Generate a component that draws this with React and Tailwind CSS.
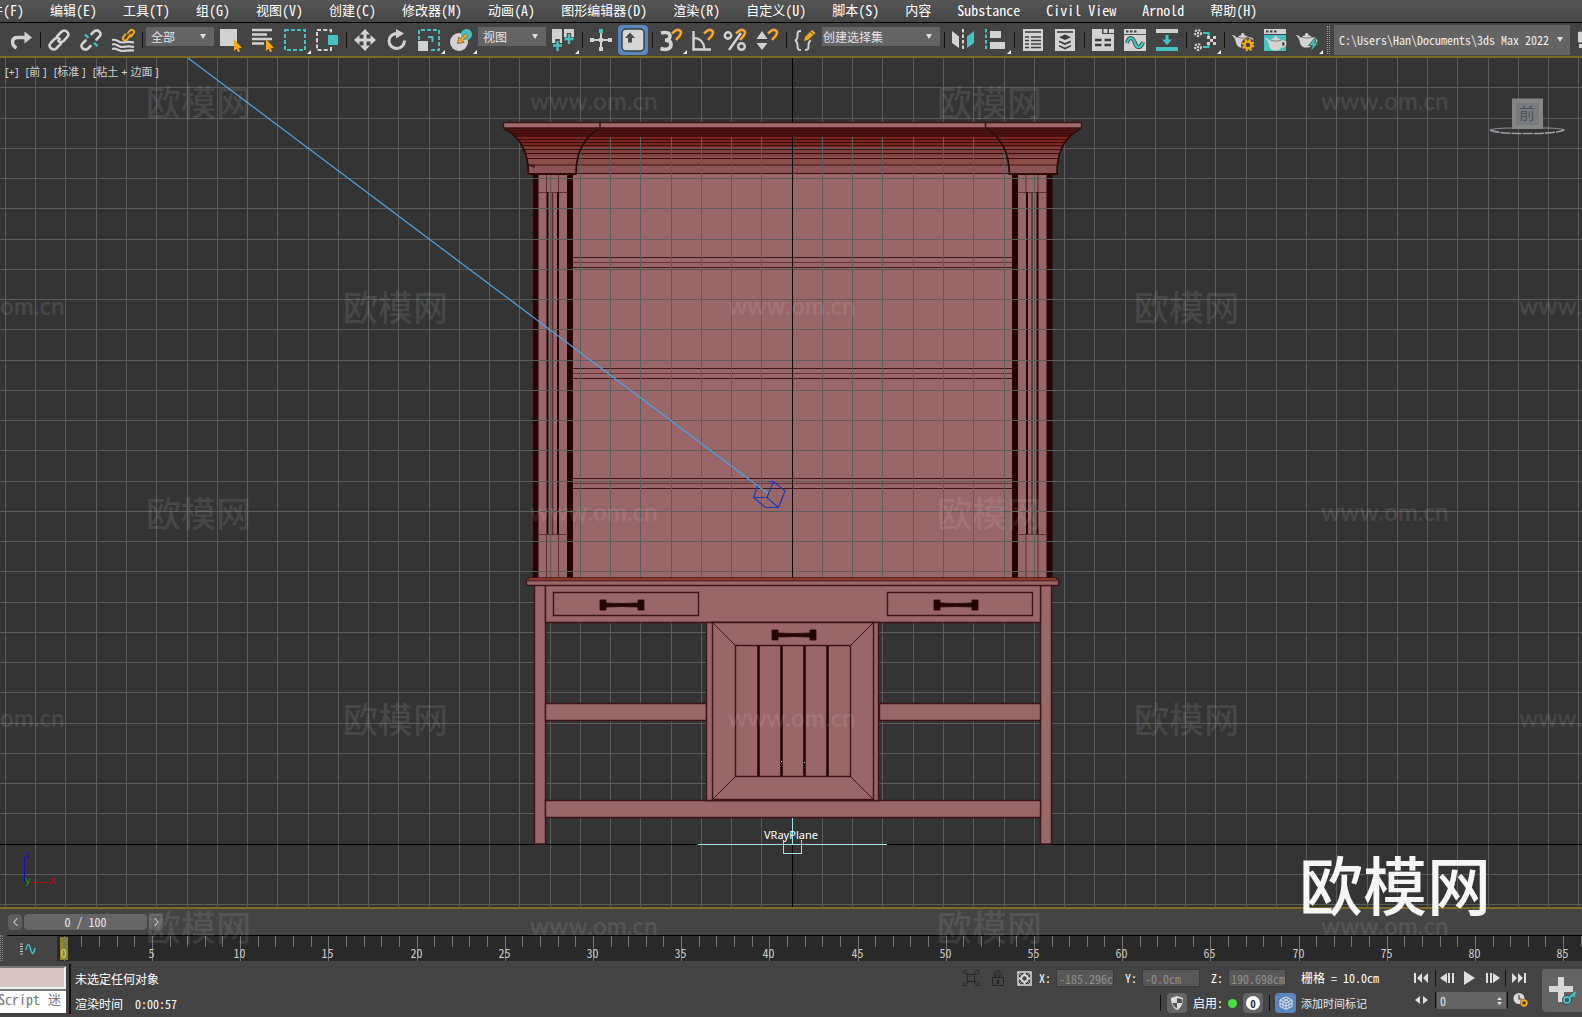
import { useState } from 'react';
import clsx from 'clsx';

const MONO = "font-['Noto_Sans_Mono_CJK_SC','Liberation_Mono','Noto_Sans_CJK_SC',monospace]";
const UI = "font-['Noto_Sans_Mono_CJK_SC','Noto_Sans_CJK_SC',sans-serif]";

const GREY = '#d2d2d2';
const TEAL = '#45c1c1';
const AMBER = '#f5a81c';

const MENUS = [
  ['文件', '(F)'],
  ['编辑', '(E)'],
  ['工具', '(T)'],
  ['组', '(G)'],
  ['视图', '(V)'],
  ['创建', '(C)'],
  ['修改器', '(M)'],
  ['动画', '(A)'],
  ['图形编辑器', '(D)'],
  ['渲染', '(R)'],
  ['自定义', '(U)'],
  ['脚本', '(S)'],
  ['内容', ''],
  ['', 'Substance'],
  ['', 'Civil View'],
  ['', 'Arnold'],
  ['帮助', '(H)'],
];

function Icon({ children, className = 'h-6 w-6' }) {
  return (
    <svg viewBox="0 0 24 24" className={className} fill="none" aria-hidden="true">
      {children}
    </svg>
  );
}

/* ---------- toolbar glyphs ---------- */

const Magnet = () => (
  <path d="M13 5.500 16.500 2.600c4-2.400 7.200 1.400 4.200 5L17 12" stroke={AMBER} strokeWidth="2.600" />
);

const Cursor = () => <path d="m15 11 8 9-3.600.2 1.800 3-2 .8-1.700-3.200L15 23z" fill={AMBER} />;

const Teapot = () => (
  <>
    <path
      d="M1 7c2.500 0 4 1.600 5 3 .6-1.200 1.800-2.300 4-2.800l.2-1.700c.8-.8 2.200-.8 3 0l.2 1.700c2 .4 3.300 1.200 4 2.300 2.800-1 5.600.6 5 3.700-.5 2.500-2.600 3.700-5.200 3.400-.8 1.300-2 2.400-3.200 2.900H9C6 18.500 4.800 15 4.500 12.600 4 10.500 2.500 9 1 7z"
      fill={GREY}
    />
    <path d="M18 11.500c1.500-.6 2.800 0 2.600 1.700-.1 1.300-.9 1.900-1.900 1.900z" fill="#444" />
    <path d="M7 9.300c3 1 7 1 10 0" stroke="#555" strokeWidth=".7" />
  </>
);

const ICONS = {
  redo: (
    <>
      <path d="M7.500 20C2.500 17.500 1.500 9.500 9 9.500h8" stroke={GREY} strokeWidth="3.400" />
      <path d="M15.500 3.500 23 9.500l-7.500 6z" fill={GREY} />
    </>
  ),
  link: (
    <g stroke={GREY} strokeWidth="2.600" strokeLinecap="round">
      <path d="m10 8.500 4.500-4.700c3.700-3.300 9 1.200 5.800 5.200l-3.600 3.800c-1.600 1.600-4 1.500-5.300.2" />
      <path d="m14 15.500-4.500 4.700c-3.700 3.300-9-1.200-5.800-5.200l3.600-3.800c1.600-1.600 4-1.500 5.300-.2" />
    </g>
  ),
  unlink: (
    <>
      <g stroke={GREY} strokeWidth="2.600" strokeLinecap="round">
        <path d="m12.500 6 2.500-2.500c3.500-3 8.500 1.200 5.500 5l-3 3" />
        <path d="M11.500 18 9 20.500c-3.500 3-8.500-1.200-5.500-5l3-3" />
      </g>
      <path d="m6 6.500 3.500 3.300m5.500 5 3.500 3.300" stroke={TEAL} strokeWidth="2.400" />
    </>
  ),
  bind: (
    <>
      <path
        d="M1 12c4.500-1.500 6 2.500 10 2.500S17 13 23 14.500M1 16.500c4.500-1.500 6 2.500 10 2.500s6-1.500 12 0M1 21c4.500-1.500 6 2 10 2s6-1 12-.5"
        stroke={GREY}
        strokeWidth="2.200"
      />
      <g stroke={AMBER} strokeWidth="2" strokeLinecap="round">
        <path d="m17 5 1.800-2.400c2.600-2 5.200.4 3.600 2.800L20 8.700" />
        <path d="M19.500 6.500 16 11.500c-2.300 2.200-5.200-.2-3.500-2.700l2-2.600" />
      </g>
    </>
  ),
  select: (
    <>
      <path d="M1 1h17v17H1z" fill={GREY} />
      <Cursor />
    </>
  ),
  selectName: (
    <>
      <path d="M1 2h20M1 6.500h15M1 11h20M1 15.500h12" stroke={GREY} strokeWidth="2.400" />
      <Cursor />
    </>
  ),
  region: <path d="M2 2h20v20H2z" stroke={TEAL} strokeWidth="2" strokeDasharray="4 2" />,
  windowCross: (
    <>
      <path d="M2 2h14v20H2z" stroke={GREY} strokeWidth="2" strokeDasharray="4 2.200" />
      <path d="M12 6h11v12H12z" fill="#444" />
      <path d="M13 7h10v10H13z" fill={TEAL} />
    </>
  ),
  move: (
    <path
      d="m12 1 5 5.500h-3.500v4h4V7l5.500 5-5.500 5v-3.500h-4v4H17L12 23l-5-5.500h3.500v-4h-4V17L1 12l5.500-5v3.500h4v-4H7z"
      fill={GREY}
    />
  ),
  rotate: (
    <>
      <path d="M19.500 12.500c0 4.200-3.200 8-7.500 8s-8-3.300-8-7.600S7.500 5.500 12.500 5.500" stroke={GREY} strokeWidth="3" />
      <path d="M11 1v9.500l8-5z" fill={GREY} />
    </>
  ),
  scale: (
    <>
      <path d="M2 12V2h20v20H12" stroke={TEAL} strokeWidth="2" strokeDasharray="4 2" />
      <path d="M1 13h10v10H1z" fill={GREY} />
      <path d="M11 9h4.500v5" stroke={TEAL} strokeWidth="2" />
    </>
  ),
  place: (
    <>
      <circle cx="10" cy="14" r="9" fill={GREY} />
      <circle cx="17.500" cy="6.500" r="5.500" fill={TEAL} />
      <path d="m8.500 15.500 1.300-6.500 1.700 1.700 5-5.200 2.200 2.200-5.100 5.100 1.600 1.600z" fill={AMBER} stroke="#444" strokeWidth=".6" />
    </>
  ),
  pivot: (
    <>
      <path d="M1 1h10v14H1zM13 1h10v10H13z" fill={GREY} />
      <path d="M6.500 11v12M1 17.500h11M18 5v12M12.500 11.500H23.500" stroke="#444" strokeWidth="4.500" />
      <path d="M6.500 13v10M2 17.500h9M18 6v10M13.500 11h9" stroke={TEAL} strokeWidth="2.400" />
    </>
  ),
  manipulate: (
    <>
      <path d="M12 4v16M3 12h18" stroke={GREY} strokeWidth="2" />
      <path d="M10 19h4v4h-4zM1 10h4v4H1zM19 10h4v4h-4zM10 10h4v4h-4z" fill={GREY} />
      <path d="M10 1h4v4h-4z" fill={TEAL} />
    </>
  ),
  keyboard: (
    <>
      <rect x="1" y="1" width="22" height="22" rx="4" fill="#d6d6d6" stroke="#3c3c3c" strokeWidth="1.400" />
      <path d="m9 4.500 5 5.500h-3v4.500H7V10H4z" fill="#4a4a4a" />
    </>
  ),
  snap: (
    <>
      <path d="M2 5c6-1.500 9 .2 9 3.300 0 2.700-2.400 3.800-5 3.800 3 0 6 1 6 4.300C12 21 7 22.500 1.500 20.500" stroke={GREY} strokeWidth="3.600" />
      <Magnet />
    </>
  ),
  angle: (
    <>
      <path d="M2.500 3v18.500H20" stroke={GREY} strokeWidth="2.400" />
      <path d="M3 10c6 0 10 4.500 10.500 11" stroke={GREY} strokeWidth="2.200" />
      <Magnet />
    </>
  ),
  percent: (
    <>
      <circle cx="5" cy="7.500" r="3.200" stroke={GREY} strokeWidth="2.400" />
      <circle cx="18.500" cy="18.500" r="3.300" stroke={GREY} strokeWidth="2.400" />
      <path d="M18 5 6 22" stroke={GREY} strokeWidth="2.400" />
      <Magnet />
    </>
  ),
  spinner: (
    <>
      <path d="m7 3 5.500 8h-11zM7 22l-5.500-7h11z" fill={GREY} />
      <Magnet />
    </>
  ),
  named: (
    <>
      <path
        d="M8 3C4.500 3 4.500 4 4.500 7.500S4 12 2 12.500c2 .5 2.500 1.500 2.500 5S5 22 8 22M12 22c3.500 0 3.500-1 3.500-4.500s.5-4.500 2.500-5"
        stroke={GREY}
        strokeWidth="2"
      />
      <path d="m11 13 1-4 7-7 3.500 3-7.500 7z" fill={AMBER} />
      <path d="m17 3.500 3.500 3.200" stroke="#444" strokeWidth="1" />
    </>
  ),
  mirror: (
    <>
      <path d="m1 3 7 5.500V20l-7-5z" fill={GREY} />
      <path d="M12 1v22" stroke={GREY} strokeWidth="2" strokeDasharray="3.500 2" />
      <path d="m23 3-7 5.500V20l7-5z" fill={TEAL} />
    </>
  ),
  align: (
    <>
      <path d="M3 1v22" stroke={TEAL} strokeWidth="2" strokeDasharray="3.500 2" />
      <path d="M7 3h11v7H7zM7 14h15v7H7z" fill={GREY} />
    </>
  ),
  sceneExplorer: (
    <>
      <path d="M2 1h20v22H2z" fill={GREY} />
      <path d="M4 4h16M4 9h4M10 9h10M4 12.500h4M10 12.500h10M4 16h4M10 16h10M4 19.500h4M10 19.500h10" stroke="#3c3c3c" strokeWidth="1.700" />
    </>
  ),
  layers: (
    <>
      <path d="M2 1h20v22H2z" fill={GREY} />
      <path d="M4 4h16" stroke="#3c3c3c" strokeWidth="1.600" />
      <path d="m12 6.500 6 2.700-6 2.700-6-2.700zM6 12.500l6 2.400 6-2.400v1.800L12 17l-6-2.700zM6 17l6 2.400 6-2.400v1.500L12 21.500l-6-3z" fill="#3c3c3c" />
    </>
  ),
  ribbon: (
    <>
      <path d="M1 6h22v17H1zM1 1h10v6H1zM12.500 1h4v4h-4zM18 1h5v4h-5z" fill={GREY} />
      <path d="M4 12h6.500M13.500 12H20M4 17h6.500M13.500 17H20" stroke="#3c3c3c" strokeWidth="2.600" />
    </>
  ),
  curves: (
    <>
      <path d="M1 1h22v22H1z" fill={GREY} />
      <path d="M3 3.500h2.500M7 3.500h2.500M11 3.500h2.500" stroke="#3c3c3c" strokeWidth="2.200" />
      <path d="M1 6.500h22" stroke="#555" strokeWidth="1" />
      <path d="M4 15c2-7 6-6 8 0s6 5 8-1" stroke="#3c3c3c" strokeWidth="4" />
      <path d="M4 15c2-7 6-6 8 0s6 5 8-1" stroke={TEAL} strokeWidth="2.400" />
    </>
  ),
  schematic: (
    <>
      <path d="M1 1h22v4H1z" fill={GREY} />
      <path d="M1 19h22v4H1zM10.500 7h3v4.500H17l-5 5.500-5-5.500h3.500z" fill={TEAL} />
    </>
  ),
  material: (
    <>
      <path d="M10 5h5.500v5M10 19h5.500v-5" stroke={TEAL} strokeWidth="2" />
      <circle cx="5" cy="5" r="3" fill="#444" stroke={GREY} strokeWidth="2" strokeDasharray="2.200 1.300" />
      <circle cx="5" cy="19" r="3" fill="#444" stroke={GREY} strokeWidth="2" strokeDasharray="2.200 1.300" />
      <circle cx="5" cy="5" r="1.200" fill={GREY} />
      <circle cx="5" cy="19" r="1.200" fill={GREY} />
      <path d="M14 8h3v3h-3zM20 8h3v3h-3zM17 11h3v3h-3zM14 14h3v3h-3zM20 14h3v3h-3z" fill={GREY} />
    </>
  ),
  renderSetup: (
    <>
      <Teapot />
      <circle cx="17" cy="17" r="7" fill="#444" />
      <circle cx="17" cy="17" r="5.300" stroke={AMBER} strokeWidth="2" strokeDasharray="2.300 1.860" />
      <circle cx="17" cy="17" r="3.400" stroke={AMBER} strokeWidth="2.400" />
    </>
  ),
  renderFrame: (
    <>
      <path d="M1 7h22v16H1z" fill={TEAL} />
      <path d="M1 1h22v5H1z" fill={GREY} />
      <path d="M3 3.500h2.500M7 3.500h2.500M11 3.500h2.500" stroke="#3c3c3c" strokeWidth="2.200" />
      <g transform="translate(1 3)">
        <Teapot />
      </g>
    </>
  ),
  render: (
    <>
      <Teapot />
      <path d="m20 10-6.500 7.500h4L15 24l8.500-9h-4l2.500-5z" fill={TEAL} stroke="#444" strokeWidth=".8" />
    </>
  ),
};

/* 'fly' marks buttons with a flyout corner */
const TOOLBAR = [
  { icon: 'redo', label: '重做' },
  '|',
  { icon: 'link', label: '选择并链接' },
  { icon: 'unlink', label: '取消链接选择' },
  { icon: 'bind', label: '绑定到空间扭曲' },
  '|',
  { select: 'filter', label: '选择过滤器', options: ['全部', '几何体', '图形', '灯光'] },
  { icon: 'select', label: '选择对象' },
  { icon: 'selectName', label: '按名称选择' },
  { icon: 'region', label: '矩形选择区域', fly: true },
  { icon: 'windowCross', label: '窗口/交叉' },
  '|',
  { icon: 'move', label: '选择并移动' },
  { icon: 'rotate', label: '选择并旋转' },
  { icon: 'scale', label: '选择并均匀缩放', fly: true },
  { icon: 'place', label: '选择并放置', fly: true },
  { select: 'coords', label: '参考坐标系', options: ['视图', '屏幕', '世界'] },
  { icon: 'pivot', label: '使用轴点中心', fly: true },
  '|',
  { icon: 'manipulate', label: '选择并操纵' },
  { icon: 'keyboard', label: '键盘快捷键覆盖切换', toggle: true },
  '|',
  { icon: 'snap', label: '捕捉开关', fly: true },
  { icon: 'angle', label: '角度捕捉切换' },
  { icon: 'percent', label: '百分比捕捉切换' },
  { icon: 'spinner', label: '微调器捕捉切换' },
  '|',
  { icon: 'named', label: '管理选择集' },
  { select: 'sets', label: '命名选择集', options: ['创建选择集'], wide: true },
  '|',
  { icon: 'mirror', label: '镜像' },
  { icon: 'align', label: '对齐', fly: true },
  '|',
  { icon: 'sceneExplorer', label: '切换场景资源管理器' },
  { icon: 'layers', label: '切换层资源管理器' },
  '|',
  { icon: 'ribbon', label: '显示功能区' },
  { icon: 'curves', label: '曲线编辑器' },
  { icon: 'schematic', label: '图解视图' },
  '|',
  { icon: 'material', label: '材质编辑器', fly: true },
  '|',
  { icon: 'renderSetup', label: '渲染设置' },
  { icon: 'renderFrame', label: '渲染帧窗口' },
  { icon: 'render', label: '渲染产品', fly: true },
];

function MenuBar() {
  return (
    <nav className="flex h-[23px] shrink-0 items-start border-b border-black bg-linear-to-b from-[#565656] to-[#454545] text-white">
      <div className="-ml-[23px] flex gap-[26px]">
        {MENUS.map(([cjk, latin]) => (
          <button key={cjk + latin} type="button" className="flex h-5 shrink-0 items-center whitespace-nowrap leading-5">
            {cjk && <span className={clsx(UI, 'text-[13px]')}>{cjk}</span>}
            {latin && <span className={clsx(MONO, 'text-sm leading-5')}>{latin}</span>}
          </button>
        ))}
      </div>
    </nav>
  );
}

function Separator() {
  return (
    <div className="flex w-[6px] shrink-0 justify-center">
      <span className="h-4 w-px bg-[#111]" />
    </div>
  );
}

function ToolSelect({ item }) {
  return (
    <div className={clsx('relative mx-px mb-[6px] shrink-0', item.wide ? 'w-[118px]' : 'w-[68px]')}>
      <select
        aria-label={item.label}
        className={clsx(UI, 'block h-[19px] w-full appearance-none bg-[#646464] text-xs text-[#e4e4e4]', item.wide ? 'pl-px' : 'pl-[5px]')}
      >
        {item.options.map((o) => (
          <option key={o}>{o}</option>
        ))}
      </select>
      <svg viewBox="0 0 6 5" className="pointer-events-none absolute right-2 top-[7px] h-[5px] w-[6px]">
        <path d="M0 0h6L3 5z" fill="#e0e0e0" />
      </svg>
    </div>
  );
}

function Toolbar() {
  const [override, setOverride] = useState(true);

  return (
    <div className="flex h-[33px] shrink-0 items-center overflow-hidden bg-[#444] pl-[5px]">
      {TOOLBAR.map((item, i) => {
        if (item === '|') return <Separator key={i} />;
        if (item.select) return <ToolSelect key={item.select} item={item} />;
        return (
          <button
            key={item.icon}
            type="button"
            title={item.label}
            aria-label={item.label}
            onClick={item.toggle ? () => setOverride(!override) : undefined}
            className="relative flex h-8 w-8 shrink-0 items-center justify-center"
          >
            <span
              className={clsx(
                'flex h-[30px] w-[30px] items-center justify-center rounded-sm',
                item.toggle && override && 'bg-[#5a86c0]'
              )}
            >
              <Icon>{ICONS[item.icon]}</Icon>
            </span>
            {item.fly && (
              <svg viewBox="0 0 4 4" className="absolute bottom-[2px] right-0 h-1 w-1">
                <path d="M4 0v4H0z" fill="#f0f0f0" />
              </svg>
            )}
          </button>
        );
      })}
      <span className="ml-1 h-7 w-[3px] shrink-0 border-x border-dotted border-[#999]" />
      <button
        type="button"
        className={clsx(MONO, 'ml-1 flex h-[30px] min-w-0 flex-1 items-center justify-between overflow-hidden whitespace-nowrap bg-[#646464] pl-[5px] pr-[7px] text-xs text-[#eee]')}
      >
        {'C:\\Users\\Han\\Documents\\3ds Max 2022'}
        <svg viewBox="0 0 6 5" className="h-[5px] w-[6px] shrink-0">
          <path d="M0 0h6L3 5z" fill="#e0e0e0" />
        </svg>
      </button>
      <div className="flex w-3 shrink-0 justify-end">
        <svg viewBox="0 0 5 18" className="h-[18px] w-[5px]">
          <path d="M1 1q2-1 4 0v10q-2 1-4 0zM2 13h3v4H2z" fill={GREY} />
        </svg>
      </div>
    </div>
  );
}

/* ---------- viewport scene ---------- */

const CX = 792.5;
const GROUND = 844.5;
const EDGE = '#3d1417';
const DARK = '#240505';
const CLAY = '#99666a';

// grid lines snap to whole pixels
const gridX = Array.from({ length: 53 }, (_, i) => Math.floor(792.2 + (i - 26) * 30.26) + 0.5);
const gridY = Array.from({ length: 29 }, (_, i) => Math.floor(844.24 + (i - 26) * 30.25) + 0.5);

function Grid({ stroke }) {
  return (
    <g stroke={stroke} strokeWidth="1" shapeRendering="crispEdges">
      {gridX.map((x) => (
        <path key={x} d={`M${x} 58V907`} />
      ))}
      {gridY.map((y) => (
        <path key={y} d={`M0 ${y}H1582`} />
      ))}
    </g>
  );
}

function Pilaster({ x }) {
  return (
    <g>
      <path d={`M${x} 174h40v404h-40z`} fill={CLAY} />
      <path d={`M${x} 174h6v404h-6zM${x + 34.500} 174h6v404h-6z`} fill={DARK} />
      <path d={`M${x + 14} 174v18M${x + 26} 174v18M${x + 14} 535v43M${x + 26} 535v43M${x + 6} 192.500h29M${x + 6} 534.500h29`} stroke="#5f2f32" />
      <path d={`M${x + 15} 192v342M${x + 25.500} 192v342`} stroke={DARK} strokeWidth="2" />
      <path d={`M${x + 20} 192v342`} stroke="#5a2b2e" strokeWidth="1.500" />
    </g>
  );
}

function Handle({ x, y }) {
  return (
    <path
      d={`M${x} ${y}h6v3q16 1 32 0v-3h6v10h-6v-3q-16-1-32 0v3h-6z`}
      fill={DARK}
      stroke={DARK}
      strokeWidth=".8"
    />
  );
}

const CROWN_BANDS = [
  [128, 9, '#521312'],
  [137, 10, '#78261f'],
  [147, 9, '#7f3f3c'],
  [156, 8, '#8a4d4c'],
  [164, 10, '#8d5457'],
];
const CROWN_LINES = [128.500, 131, 133.500, 136, 139.500, 142.500, 145.500, 149.500, 153.500, 158.500, 165, 173.500];

function CrownFill({ x, width }) {
  return (
    <>
      {CROWN_BANDS.map(([y, h, c]) => (
        <rect key={y} x={x} y={y} width={width} height={h} fill={c} />
      ))}
      {CROWN_LINES.map((y) => (
        <path key={y} d={`M${x} ${y}h${width}`} stroke="#3a0e0e" strokeWidth="1" />
      ))}
    </>
  );
}

const CORNER_L = 'M503.500 128C520 137 528 150 528.500 174H576C576 152 584 137 600 128z';
const CORNER_R = 'M1081.500 128C1065 137 1057 150 1057 174H1009.500C1009 152 1001 137 985.500 128z';

function Scene() {
  return (
    <svg viewBox="0 58 1582 849" preserveAspectRatio="xMidYMid slice" className="absolute inset-0 h-full w-full" role="img" aria-label="前视图">
      <defs>
        <clipPath id="crownLeft">
          <path d={CORNER_L} />
        </clipPath>
        <clipPath id="crownRight">
          <path d={CORNER_R} />
        </clipPath>
      </defs>
      <rect y="58" width="1582" height="849" fill="#343434" />

      {/* hutch back, shelves and uprights */}
      <rect x="572" y="174" width="440" height="404" fill={CLAY} />
      {[257.500, 368.500, 478.500].map((y) => (
        <g key={y}>
          <path d={`M572 ${y}h440M572 ${y + 10}h440`} stroke={EDGE} />
          <path d={`M572 ${y + 5}h440`} stroke="#6b3035" />
        </g>
      ))}
      <CrownFill x={560} width={460} />
      <Pilaster x={532.500} />
      <Pilaster x={1012} />

      <Grid stroke="#5c5c5c" />
      <path d={`M${CX} 58V907M0 ${GROUND}H1582`} stroke="#000" shapeRendering="crispEdges" />
      <rect x="572" y="128" width="440" height="9" fill="#521312" />
      <path d="M572 128.500h440M572 131h440M572 133.500h440M572 136h440" stroke="#3a0e0e" />

      {/* crown */}
      <g clipPath="url(#crownLeft)">
        <CrownFill x={500} width={110} />
      </g>
      <g clipPath="url(#crownRight)">
        <CrownFill x={980} width={110} />
      </g>
      <path d={`${CORNER_L}${CORNER_R}`} fill="none" stroke="#2e0a0a" strokeWidth="1.800" />
      <path d="M503.500 122.500h578v5.500h-578z" fill="#a06a6d" stroke={EDGE} strokeWidth="1.400" />
      <path d="M600 122v6M985.500 122v6M529 165l6 2" stroke={EDGE} strokeWidth="1.600" />

      {/* table top and frame */}
      <g fill={CLAY} stroke={EDGE} strokeWidth="1.400">
        <path d="M534.500 585h11v259h-11zM1040.500 585h11v259h-11z" />
        <path d="M545.500 585h495v37.500h-495zM545.500 703.500h161v17h-161zM879.500 703.500h161v17h-161zM545.500 800.500h495v17h-495z" />
        <path d="M706.500 622.500h172v178h-172z" />
        <path d="M712.500 622.500h161v177h-161z" />
        <path d="M712.500 622.500l23 23M873.500 622.500l-23 23M712.500 799.500l23-23M873.500 799.500l-23-23" strokeWidth="1" />
        <path d="M735.500 645.500h115v131h-115z" />
        <path d="M553.500 592.500h145v23h-145zM887.500 592.500h145v23h-145z" />
        <path d="M526.500 585.500v-5l3-2.500h526l3 2.500v5z" />
      </g>
      <path d="M529 579h527" stroke="#8f3530" strokeWidth="2" />
      <path d="M528 580.800h529" stroke={EDGE} strokeWidth="1" />
      <path d="M758.500 646v130M781.500 646v130M804.500 646v130M827.500 646v130" stroke={DARK} strokeWidth="2.600" />
      <Handle x={600} y={600} />
      <Handle x={934} y={600} />
      <Handle x={772} y={630} />
      <path d="M781 761.500h1" stroke="#fff" />
      <path d="M804 762.500h1" stroke="#7fd" />

      {/* light target and light plane */}
      <path d="M188 58 768 493.500" stroke="#4ba6ea" strokeWidth="1.200" />
      <path
        d="M753.500 497.500h13.500l6.500-16M753.500 497.500l4-11.500M768 481.500h5.500l11.500 9.500-6.500 16.500h-13l-12-10M767 497.500l11.500 10"
        fill="none"
        stroke="#1b3bb8"
        strokeWidth="1.200"
      />
      <g stroke="#9be8ec" fill="none" shapeRendering="crispEdges">
        <path d="M698 844.500h189M792.500 818v26M783.500 840v13.500h18V840" />
      </g>
      <text x="764" y="839" fill="#fff" className="font-['Noto_Sans',sans-serif] text-[11px]">VRayPlane</text>

      {/* axis tripod */}
      <path d="M24.500 857v25" stroke="#1010b4" />
      <path d="M31 882.500h22" stroke="#b01010" />
      <g className="font-['DejaVu_Sans',sans-serif] text-[10px]">
        <text x="25" y="858" fill="#1515c0">z</text>
        <text x="25" y="884" fill="#12a012">y</text>
        <text x="50" y="884" fill="#b01010">x</text>
      </g>

      {/* view cube */}
      <path d="M1490 130c5-1.500 12-2 22-2M1543 128c10 0 18 .5 22 2" fill="none" stroke="#8f9499" />
      <path d="M1490 130c6 3 20 3.500 37 3.500s31-.5 37-3.500" fill="none" stroke="#9aa0a6" strokeWidth="1.600" strokeDasharray="10 1" />
      <path d="M1512 98.500h31V129h-31z" fill="#868686" />
      <path d="M1516 103h23v22h-23z" fill="#787b7f" />
      <text x="1519" y="119" fill="#4d5258" className="font-['Noto_Sans_CJK_SC',sans-serif] text-base">前</text>
    </svg>
  );
}

function Viewport() {
  return (
    <main className="relative min-h-0 flex-1 overflow-hidden border-y-2 border-[#7d6a27] bg-[#343434]">
      <Scene />
      <div className={clsx("font-['Noto_Sans','Noto_Sans_CJK_SC',sans-serif]", 'relative flex gap-[7px] pl-[5px] pt-[6px] text-[11px] leading-4 text-[#d0d0d0]')}>
        <button type="button">[+]</button>
        <button type="button">[前 ]</button>
        <button type="button">[标准 ]</button>
        <button type="button">[粘土 + 边面 ]</button>
      </div>
    </main>
  );
}

/* ---------- time slider ---------- */

function TimeSlider() {
  const [frame, setFrame] = useState(0);

  return (
    <div className={clsx(MONO, 'flex h-[26px] shrink-0 items-center gap-[2px] bg-[#444] pl-2 text-xs text-[#e6e6e6]')}>
      <button type="button" aria-label="上一帧" onClick={() => setFrame(Math.max(0, frame - 1))} className="flex h-4 w-[14px] items-center justify-center rounded-sm bg-[#5e5e5e]">
        <svg viewBox="0 0 5 8" className="h-2 w-[5px]"><path d="M4.500 0 .7 4l3.800 4" fill="none" stroke="#eee" /></svg>
      </button>
      <button type="button" className="flex h-4 w-[123px] items-center justify-center rounded-sm bg-[#666]">
        {frame} / 100
      </button>
      <button type="button" aria-label="下一帧" onClick={() => setFrame(Math.min(100, frame + 1))} className="flex h-4 w-[14px] items-center justify-center rounded-sm bg-[#5e5e5e]">
        <svg viewBox="0 0 5 8" className="h-2 w-[5px]"><path d="M.5 0l3.800 4-3.800 4" fill="none" stroke="#eee" /></svg>
      </button>
    </div>
  );
}

function TrackBar() {
  const ticks = Array.from({ length: 87 }, (_, i) => i);
  const at = (i) => Math.floor(7.2 + i * 17.64) + 0.5;

  return (
    <div className="flex h-[26px] shrink-0 bg-[#444]">
      <span className="w-[3px] border-x border-dotted border-[#8a8a8a]" />
      <button type="button" aria-label="打开迷你曲线编辑器" className="ml-1 flex w-[50px] items-center justify-center border-t border-black pr-2">
        <svg viewBox="0 0 16 12" className="h-3 w-4" fill="none">
          <path d="M0 1h3M0 3.500h3M0 6h3M0 8.500h3M0 11h3" stroke="#ccc" />
          <path d="M6 7c1-7 3-7 4.500-1s3 6 4.500-1" stroke={TEAL} strokeWidth="1.500" />
        </svg>
      </button>
      <svg className={clsx(MONO, 'h-full min-w-0 flex-1 border-t border-black bg-[#292929] text-xs')} role="img" aria-label="时间标尺">
        <rect x="3" y="1" width="8" height="23" fill="#8b8425" />
        {ticks.map((i) => (
          <path key={i} d={`M${at(i)} 0V${i % 5 === 0 ? 25 : 11}`} stroke="#767676" />
        ))}
        {ticks
          .filter((i) => i % 5 === 0)
          .map((i) => (
            <text key={i} x={at(i) - 1} y="22" textAnchor="middle" fill={i ? '#c8c8c8' : '#e0d860'}>
              {i}
            </text>
          ))}
      </svg>
    </div>
  );
}

/* ---------- status bar ---------- */

function CoordField({ axis, value }) {
  return (
    <label className="flex items-center gap-[5px] text-xs text-white">
      <span className="w-3 whitespace-nowrap">{axis}:</span>
      <input
        defaultValue={value}
        className="h-[18px] w-[58px] border border-[#3c3c3c] bg-[#585858] pl-[2px] text-xs leading-4 text-[#8f8f8f]"
      />
    </label>
  );
}

function Divider({ className = 'h-4' }) {
  return <span className={clsx('w-px shrink-0 bg-[#111]', className)} />;
}

function Coordinates() {
  return (
    <div className={clsx(MONO, 'flex w-[416px] shrink-0 flex-col gap-[5px] pt-[7px]')}>
      <div className="flex h-5 items-center">
        <button type="button" aria-label="孤立当前选择">
          <svg viewBox="0 0 16 16" className="h-4 w-4" fill="none" stroke="#262626">
            <path d="M4.500 4.500h7v7h-7zM.5 4V.5H4M12 .5h3.500V4M15.500 12v3.500H12M4 15.500H.5V12M3 5V3h2M11 3h2v2M13 11v2h-2M5 13H3v-2" />
          </svg>
        </button>
        <button type="button" aria-label="选择锁定切换" className="ml-3">
          <svg viewBox="0 0 14 16" className="h-4 w-[14px]" fill="none" stroke="#262626">
            <path d="M1.500 7.500h11v8h-11zM3.500 7V4.500C3.500-.5 10.500-.5 10.500 4.500V7M5.500 7V5c0-2.500 3-2.500 3 0v2" />
            <path d="M7 10v4" strokeWidth="2.500" />
          </svg>
        </button>
        <button type="button" aria-label="绝对模式变换输入" className="ml-3">
          <svg viewBox="0 0 15 15" className="h-[15px] w-[15px]" fill="none" stroke="#dcdcdc">
            <path d="M1 1h13v13H1z" strokeWidth="1.500" />
            <circle cx="7.500" cy="7.500" r="3.200" strokeWidth="2" />
            <path d="M7.500 2v3M7.500 10v3M2 7.500h3M10 7.500h3" strokeWidth="2" />
            <path d="m2 2 2.500 2.500M13 2l-2.500 2.500M2 13l2.500-2.500M13 13l-2.500-2.500" strokeWidth=".8" />
          </svg>
        </button>
        <div className="ml-[7px] flex gap-[11px]">
          <CoordField axis="X" value="-185.296cm" />
          <CoordField axis="Y" value="-0.0cm" />
          <CoordField axis="Z" value="190.698cm" />
        </div>
        <p className={clsx(MONO, 'ml-[15px] whitespace-nowrap text-xs text-white')}>栅格 = 10.0cm</p>
      </div>
      <div className="flex h-5 items-center pl-[197px]">
        <Divider className="h-4" />
        <button type="button" aria-label="安全" className="ml-[6px] flex h-5 w-5 items-center justify-center rounded-sm bg-[#646464]">
          <svg viewBox="0 0 12 14" className="h-[14px] w-3">
            <path d="M6 0l6 2c0 6-2 10-6 12C2 12 0 8 0 2z" fill="#ddd" />
            <path d="M6 2v5h5c.3-1.300.4-2.500.3-3.800zM6 7v5.500C3.500 11 2 9.500 1.300 7z" fill="#555" />
          </svg>
        </button>
        <span className={clsx(UI, 'ml-[6px] w-[30px] whitespace-nowrap text-xs text-white')}>启用:</span>
        <span className="ml-[5px] h-[9px] w-[9px] rounded-full bg-[#4fdd45]" />
        <button type="button" className="ml-[6px] flex h-5 w-5 items-center justify-center rounded-sm bg-[#646464]">
          <span className="flex h-[14px] w-[14px] items-center justify-center rounded-full bg-white text-[11px] font-bold leading-none text-[#333]">0</span>
        </button>
        <Divider className="ml-[6px] h-4" />
        <button type="button" aria-label="时间标记" className="ml-[5px] flex h-5 w-[21px] items-center justify-center rounded-sm bg-[#5a86c0]">
          <svg viewBox="0 0 14 14" className="h-[14px] w-[14px]" fill="none" stroke="#e4e4e4">
            <path d="M7 .8 13 4v6.500L7 13.400 1 10.500V4zM1 4l6 3 6-3M7 7v6M4 2.400l6 3.200v6.200M10 2.400 4 5.600v6.200M1 7.200l6 3 6-3" />
          </svg>
        </button>
        <button type="button" className={clsx(UI, 'ml-[5px] whitespace-nowrap text-[11px] text-[#e8e8e8]')}>添加时间标记</button>
      </div>
    </div>
  );
}

function PlayButton({ label, d, className = 'w-[27px]' }) {
  return (
    <button type="button" aria-label={label} className={clsx('flex h-5 items-center justify-center', className)}>
      <svg viewBox="0 0 15 14" className="h-[14px] w-[15px]" fill="#dedede">
        <path d={d} />
      </svg>
    </button>
  );
}

function Playback() {
  return (
    <div className="flex w-[124px] shrink-0 flex-col gap-[2px] pt-[7px]">
      <div className="flex items-center">
        <PlayButton label="转至开头" d="M0 2h2v10H0zM8 2v10L3 7zM14 2v10L9 7z" />
        <Divider />
        <PlayButton label="上一帧" className="w-[22px]" d="M7 2v10L0 7zM8 2h2v10H8zM12 2h2v10h-2z" />
        <PlayButton label="播放动画" className="w-[22px]" d="M2 0v14l11-7z" />
        <PlayButton label="下一帧" className="w-[25px]" d="M8 2v10l7-5zM1 2h2v10H1zM5 2h2v10H5z" />
        <Divider />
        <PlayButton label="转至结尾" className="w-[24px]" d="M13 2h2v10h-2zM7 2v10l5-5zM1 2v10l5-5z" />
      </div>
      <div className="flex items-center">
        <PlayButton label="关键点模式切换" d="M6 3v8L1 7zM9 3v8l5-4z" />
        <Divider />
        <div className="relative mx-px h-[17px] w-[69px]">
          <input aria-label="当前帧" defaultValue="0" className={clsx(MONO, 'block h-full w-full bg-[#646464] pl-[3px] text-xs leading-4 text-[#e8e8e8]')} />
          <svg viewBox="0 0 5 10" className="absolute right-1 top-1 h-[10px] w-[5px]">
            <path d="M0 4h5L2.500 1zM0 6h5L2.500 9z" fill="#ddd" />
          </svg>
        </div>
        <Divider />
        <button type="button" aria-label="时间配置" className="flex h-5 w-[24px] items-center justify-center">
          <svg viewBox="0 0 15 14" className="h-[14px] w-[15px]" fill="none">
            <circle cx="6" cy="5.500" r="5.500" fill="#dadada" />
            <path d="M6 2v4h3" stroke="#444" strokeWidth="1.200" />
            <circle cx="11" cy="10" r="4" fill="#444" />
            <circle cx="11" cy="10" r="2.600" stroke={AMBER} strokeWidth="1.600" />
            <circle cx="11" cy="10" r="3.600" stroke={AMBER} strokeDasharray="1.400 1.400" />
          </svg>
        </button>
      </div>
    </div>
  );
}

function StatusBar() {
  return (
    <footer className="flex h-[56px] shrink-0 overflow-hidden bg-[#444]">
      <div className="mt-[5px] w-[66px] shrink-0 overflow-hidden">
        <input aria-label="宏录制器" className="block h-[23px] w-full border-y-2 border-r-2 border-t-[#777] border-b-[#eee] border-r-[#eee] bg-[#dcc3c3]" />
        <div className="flex h-[24px] w-full justify-end border-t-2 border-[#777] bg-white pr-[5px]">
          <button type="button" className={clsx(MONO, 'flex items-start gap-2 whitespace-nowrap text-sm leading-4 text-[#777]')}>
            MAXScript <span className="text-[13px]">迷</span>
          </button>
        </div>
      </div>
      <span className="mb-[3px] ml-[3px] mt-[3px] w-[2px] shrink-0 bg-[#111]" />
      <div className="ml-1 flex min-w-0 flex-1 flex-col gap-[9px] overflow-hidden pt-[10px] text-xs leading-4 text-white">
        <p className={clsx(UI, 'whitespace-nowrap')}>未选定任何对象</p>
        <p className="flex gap-3 whitespace-nowrap">
          <span className={UI}>渲染时间</span>
          <span className={MONO}>0:00:57</span>
        </p>
      </div>
      <Coordinates />
      <div className="ml-[29px]">
        <Playback />
      </div>
      <button type="button" aria-label="设置关键点" className="ml-[10px] mt-2 flex h-[43px] w-10 shrink-0 items-center justify-end rounded-l bg-[#646464] pr-[4px]">
        <svg viewBox="0 0 30 30" className="h-[30px] w-[30px]" fill="none">
          <path d="M10 1h6v9h9v6h-9v10h-6V16H1v-6h9z" fill="#d8d8d8" />
          <circle cx="19" cy="24" r="3" stroke="#444" strokeWidth="4" />
          <circle cx="19" cy="24" r="3" stroke={TEAL} strokeWidth="2" />
          <path d="m21 22 7-6M25 18l2 2.500" stroke={TEAL} strokeWidth="2.200" />
        </svg>
      </button>
    </footer>
  );
}

/* ---------- brand marks over the whole window ---------- */

const ROWS = [104, 309, 515, 721, 929];

function Watermark() {
  return (
    <svg viewBox="0 0 1582 1017" preserveAspectRatio="xMidYMid slice" className="pointer-events-none absolute inset-0 h-full w-full">
      <g fill="#fff" fillOpacity=".1">
        {ROWS.map((y, i) => {
          const logos = i % 2 ? [343, 1134] : [146, 937];
          const urls = i % 2 ? [-63, 728, 1519] : [530, 1321];
          return (
            <g key={y}>
              {logos.map((x) => (
                <text key={x} x={x} y={y + 12} className="font-['Noto_Sans_CJK_SC',sans-serif] text-[35px] font-medium">欧模网</text>
              ))}
              {urls.map((x) => (
                <text key={x} x={x} y={y + 6} className="font-['Lato',sans-serif] text-[24px] font-bold">www.om.cn</text>
              ))}
            </g>
          );
        })}
      </g>
      <text x="1299" y="910" fill="#f6f6f6" className="font-['Noto_Sans_CJK_SC',sans-serif] text-[64px] font-medium">欧模网</text>
    </svg>
  );
}

export default function App() {
  return (
    <div className="relative flex h-screen flex-col overflow-hidden bg-[#444]">
      <MenuBar />
      <Toolbar />
      <Viewport />
      <TimeSlider />
      <TrackBar />
      <StatusBar />
      <Watermark />
    </div>
  );
}
